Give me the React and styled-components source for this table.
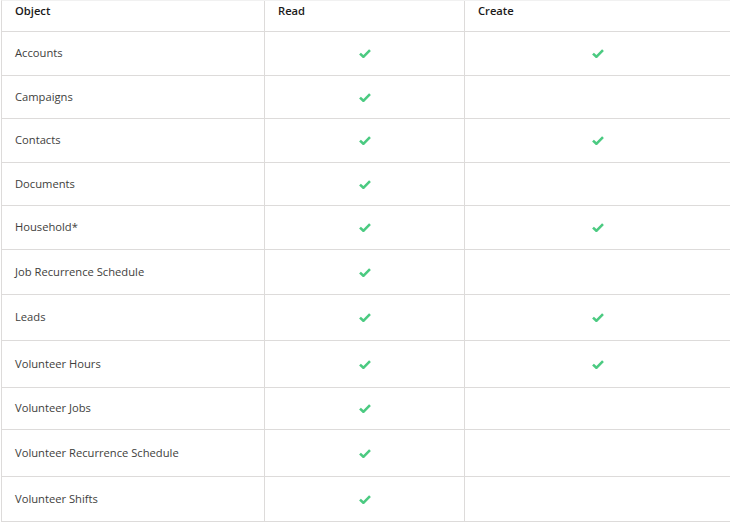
import React from "react";
import styled, { createGlobalStyle } from "styled-components";

const Global = createGlobalStyle`
  html, body { margin: 0; padding: 0; background: #ffffff; }
  body { font-family: "Open Sans", "Noto Sans", Arial, sans-serif; }
`;

const Wrap = styled.div`
  padding-left: 1px;
  width: 729px;
`;

const Table = styled.div`
  display: grid;
  grid-template-columns: 263px 200px 266px;
  border-left: 1px solid #dddbda;
  border-top: 1px solid #f1f1f1;
`;

const Cell = styled.div`
  display: flex;
  align-items: center;
  justify-content: ${(p) => (p.$center ? "center" : "flex-start")};
  box-sizing: border-box;
  height: ${(p) => p.$h}px;
  padding: 0 0 ${(p) => (p.$center ? "0" : "2px")} ${(p) => (p.$center ? "0" : "13px")};
  border-bottom: 1px solid #dddbda;
  border-right: ${(p) => (p.$last ? "none" : "1px solid #dddbda")};
  font-size: 11.2px;
  color: #3e3e3c;
  white-space: nowrap;
`;

const HeadCell = styled(Cell)`
  align-items: flex-start;
  padding-top: 2px;
  padding-bottom: 0;
  font-weight: 600;
  color: #1b1a19;
`;

const Check = () => (
  <svg width="12" height="9" viewBox="0 0 12 9" aria-hidden="true">
    <path d="M1 4.6 L4.4 7.8 L11 1.2" fill="none" stroke="#4bca81" strokeWidth="2.6" strokeLinejoin="miter" />
  </svg>
);

const rows = [
  ["Accounts", true, true, 44],
  ["Campaigns", true, false, 43],
  ["Contacts", true, true, 44],
  ["Documents", true, false, 43],
  ["Household*", true, true, 44],
  ["Job Recurrence Schedule", true, false, 45],
  ["Leads", true, true, 46],
  ["Volunteer Hours", true, true, 47],
  ["Volunteer Jobs", true, false, 42],
  ["Volunteer Recurrence Schedule", true, false, 47],
  ["Volunteer Shifts", true, false, 45],
];

export default function App() {
  return (
    <Wrap>
      <Global />
      <Table>
        <HeadCell $h={31}>Object</HeadCell>
        <HeadCell $h={31}>Read</HeadCell>
        <HeadCell $h={31} $last>Create</HeadCell>
        {rows.map(([name, r, c, h]) => (
          <React.Fragment key={name}>
            <Cell $h={h}>{name}</Cell>
            <Cell $h={h} $center>{r && <Check />}</Cell>
            <Cell $h={h} $center $last>{c && <Check />}</Cell>
          </React.Fragment>
        ))}
      </Table>
    </Wrap>
  );
}
